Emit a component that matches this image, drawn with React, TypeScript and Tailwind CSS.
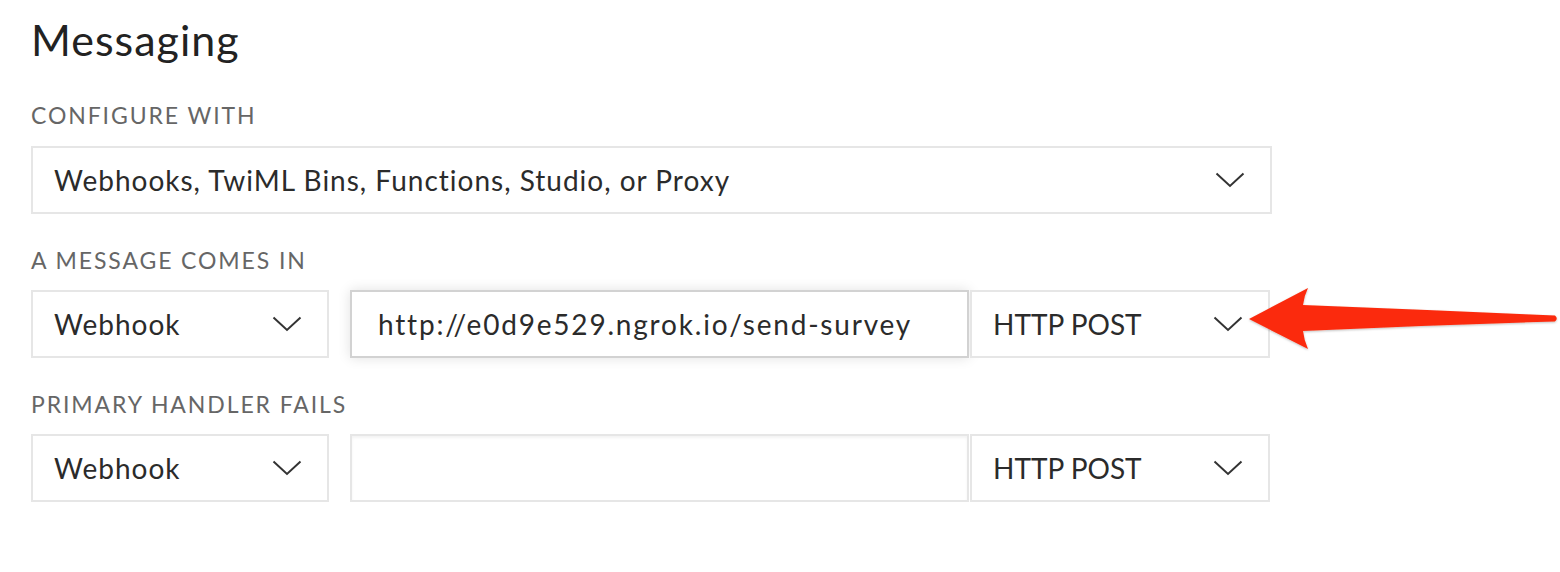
import React from "react";

const Chevron = () => (
  <svg width="30" height="16" viewBox="0 0 30 16" className="shrink-0">
    <path d="M1.5 1.5 L15 14 L28.5 1.5" fill="none" stroke="#333" strokeWidth="2" />
  </svg>
);

const Label = ({ children }: { children: React.ReactNode }) => (
  <div className="text-[23px] leading-none tracking-[1.9px] text-[#666] uppercase">{children}</div>
);

const Select = ({ text, className = "", textClass = "" }: { text: string; className?: string; textClass?: string }) => (
  <div className={`flex h-[68px] items-center justify-between border-2 border-[#e6e6e6] bg-white pl-[21px] pr-[25px] ${className}`}>
    <span className={`text-[28px] text-[#2b2b2b] ${textClass}`}>{text}</span>
    <Chevron />
  </div>
);

export default function App() {
  return (
    <div className="relative h-[572px] w-[1560px] bg-white" style={{ fontFamily: "Lato, 'Open Sans', sans-serif" }}>
      <div className="ml-[31px] w-[1240px] pt-[14px]">
        <h1 className="text-[43px] leading-[52px] tracking-[1px] text-[#222]">Messaging</h1>
        <div className="mt-[38px]">
          <Label>Configure with</Label>
        </div>
        <Select
          text="Webhooks, TwiML Bins, Functions, Studio, or Proxy"
          textClass="tracking-[1px]"
          className="mt-[19px] w-[1241px]"
        />
        <div className="mt-[35px]">
          <Label>A message comes in</Label>
        </div>
        <div className="mt-[18px] flex">
          <Select text="Webhook" textClass="tracking-[1px]" className="w-[298px]" />
          <div className="ml-[21px] flex h-[68px] w-[619px] items-center border-2 border-[#d2d2d2] bg-white pl-[26px] shadow-[0_0_12px_rgba(0,0,0,0.12)]">
            <span className="text-[28px] tracking-[1.8px] text-[#2b2b2b]">http://e0d9e529.ngrok.io/send-survey</span>
          </div>
          <Select text="HTTP POST" className="ml-[1px] w-[300px]" />
        </div>
        <div className="mt-[35px]">
          <Label>Primary handler fails</Label>
        </div>
        <div className="mt-[18px] flex">
          <Select text="Webhook" textClass="tracking-[1px]" className="w-[298px]" />
          <div className="ml-[21px] h-[68px] w-[619px] border-2 border-[#e6e6e6] bg-white shadow-[inset_0_2px_3px_rgba(0,0,0,0.05)]" />
          <Select text="HTTP POST" className="ml-[1px] w-[300px]" />
        </div>
      </div>
      <svg
        className="absolute left-[1240px] top-[280px]"
        width="320"
        height="80"
        viewBox="0 0 320 80"
      >
        <defs>
          <filter id="sh" x="-10%" y="-30%" width="120%" height="160%">
            <feDropShadow dx="0" dy="1" stdDeviation="1.2" floodColor="#000" floodOpacity="0.25" />
          </filter>
        </defs>
        <path
          d="M9 39 L68 8 Q64 16 63 25 Q190 30 315 35.5 Q318.5 38.5 315 41.5 Q190 45 63 51 Q64 60 68 69 Z"
          fill="#fb2c0c"
          filter="url(#sh)"
        />
      </svg>
    </div>
  );
}
